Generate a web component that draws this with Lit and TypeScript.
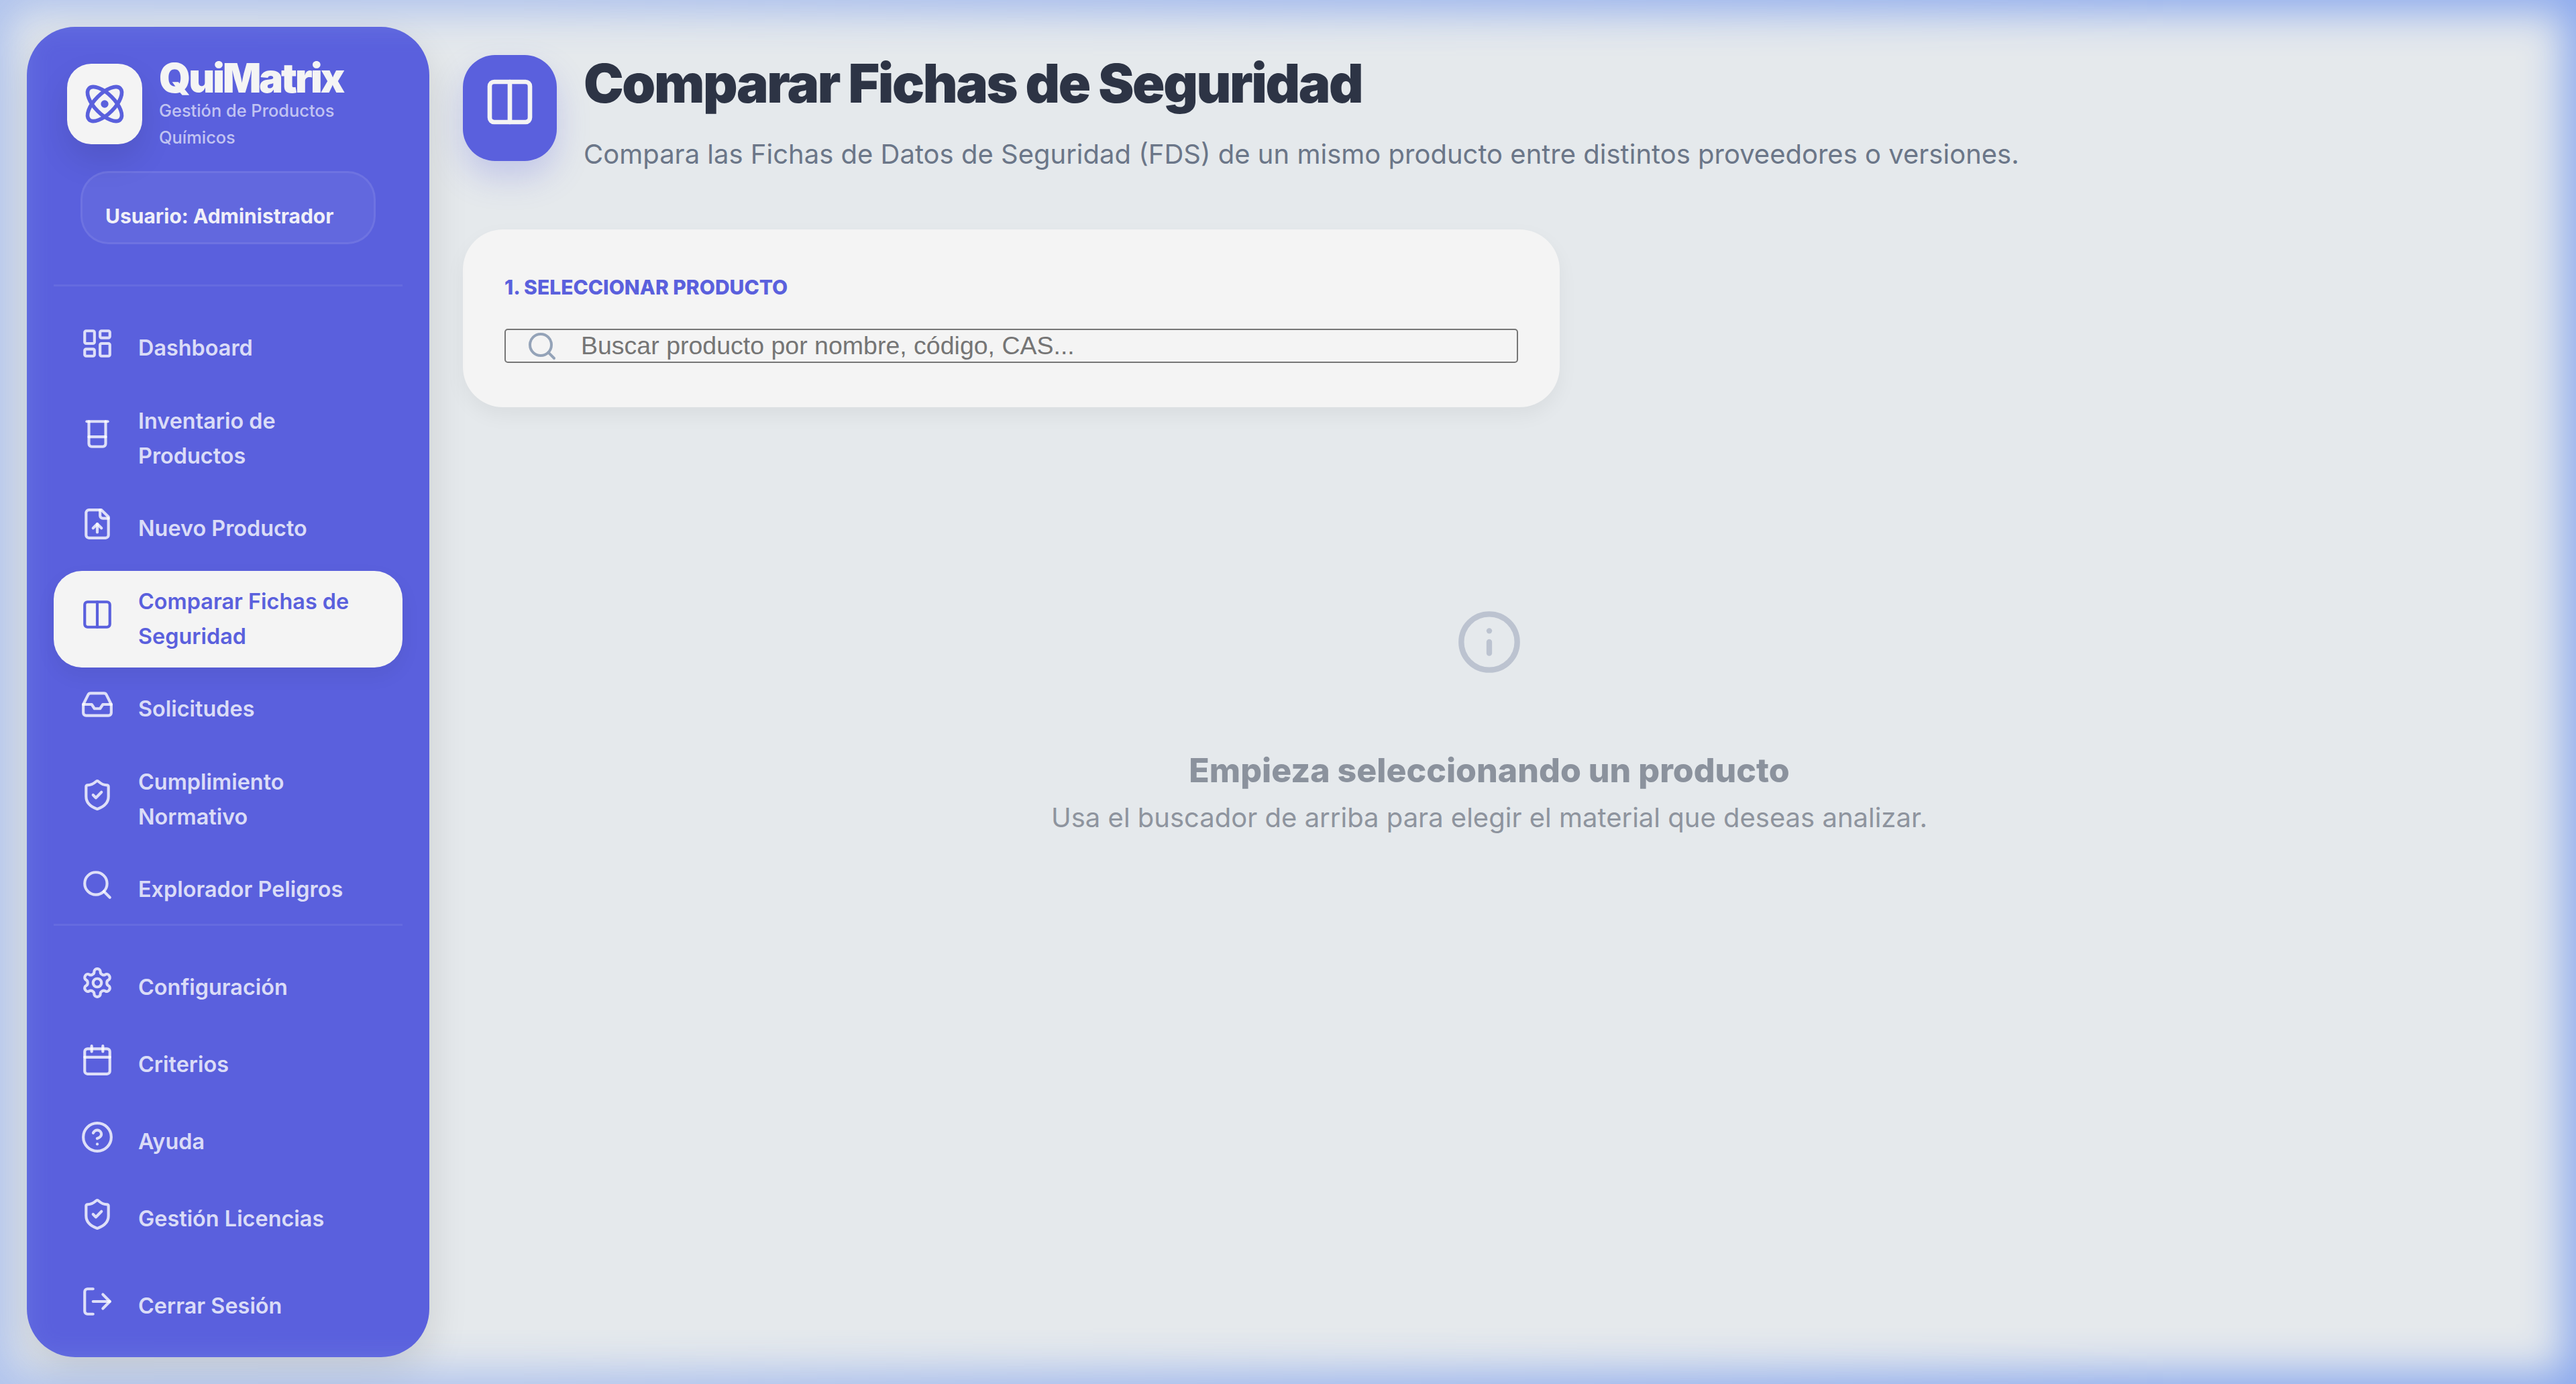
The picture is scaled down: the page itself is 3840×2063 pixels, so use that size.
import { LitElement, html, css, svg } from "lit";
import { customElement } from "lit/decorators.js";

const ic = (inner: unknown, size = 50, sw = 2) => html`<svg class="ic" width=${size} height=${size} viewBox="0 0 24 24" fill="none" stroke="currentColor" stroke-width=${sw} stroke-linecap="round" stroke-linejoin="round">${inner}</svg>`;
const columns = svg`<rect x="3" y="3" width="18" height="18" rx="2"/><path d="M12 3v18"/>`;
const icons: Record<string, unknown> = {
  dash: svg`<rect x="3" y="3" width="7" height="9" rx="1"/><rect x="14" y="3" width="7" height="5" rx="1"/><rect x="14" y="12" width="7" height="9" rx="1"/><rect x="3" y="16" width="7" height="5" rx="1"/>`,
  beaker: svg`<path d="M4.5 3h15"/><path d="M6 3v16a2 2 0 0 0 2 2h8a2 2 0 0 0 2-2V3"/><path d="M6 14h12"/>`,
  file: svg`<path d="M15 2H6a2 2 0 0 0-2 2v16a2 2 0 0 0 2 2h12a2 2 0 0 0 2-2V7Z"/><path d="M14 2v4a2 2 0 0 0 2 2h4"/><path d="M12 12v6"/><path d="m15 15-3-3-3 3"/>`,
  columns,
  inbox: svg`<polyline points="22 12 16 12 14 15 10 15 8 12 2 12"/><path d="M5.45 5.11 2 12v6a2 2 0 0 0 2 2h16a2 2 0 0 0 2-2v-6l-3.45-6.89A2 2 0 0 0 16.76 4H7.24a2 2 0 0 0-1.79 1.11z"/>`,
  shield: svg`<path d="M20 13c0 5-3.5 7.5-7.66 8.95a1 1 0 0 1-.67-.01C7.5 20.5 4 18 4 13V6a1 1 0 0 1 1-1c2 0 4.5-1.2 6.24-2.72a1.17 1.17 0 0 1 1.52 0C14.51 3.81 17 5 19 5a1 1 0 0 1 1 1z"/><path d="m9 12 2 2 4-4"/>`,
  search: svg`<circle cx="11" cy="11" r="8"/><path d="m21 21-4.3-4.3"/>`,
  gear: svg`<path d="M12.22 2h-.44a2 2 0 0 0-2 2v.18a2 2 0 0 1-1 1.73l-.43.25a2 2 0 0 1-2 0l-.15-.08a2 2 0 0 0-2.73.73l-.22.38a2 2 0 0 0 .73 2.73l.15.1a2 2 0 0 1 1 1.72v.51a2 2 0 0 1-1 1.74l-.15.09a2 2 0 0 0-.73 2.73l.22.38a2 2 0 0 0 2.73.73l.15-.08a2 2 0 0 1 2 0l.43.25a2 2 0 0 1 1 1.73V20a2 2 0 0 0 2 2h.44a2 2 0 0 0 2-2v-.18a2 2 0 0 1 1-1.73l.43-.25a2 2 0 0 1 2 0l.15.08a2 2 0 0 0 2.73-.73l.22-.39a2 2 0 0 0-.73-2.73l-.15-.08a2 2 0 0 1-1-1.74v-.5a2 2 0 0 1 1-1.74l.15-.09a2 2 0 0 0 .73-2.73l-.22-.38a2 2 0 0 0-2.73-.73l-.15.08a2 2 0 0 1-2 0l-.43-.25a2 2 0 0 1-1-1.73V4a2 2 0 0 0-2-2z"/><circle cx="12" cy="12" r="3"/>`,
  cal: svg`<path d="M8 2v4"/><path d="M16 2v4"/><rect x="3" y="4" width="18" height="18" rx="2"/><path d="M3 10h18"/>`,
  help: svg`<circle cx="12" cy="12" r="10"/><path d="M9.09 9a3 3 0 0 1 5.83 1c0 2-3 3-3 3"/><path d="M12 17h.01"/>`,
  logout: svg`<path d="M9 21H5a2 2 0 0 1-2-2V5a2 2 0 0 1 2-2h4"/><polyline points="16 17 21 12 16 7"/><line x1="21" y1="12" x2="9" y2="12"/>`,
};

const top: [string, string, boolean?][] = [
  ["dash", "Dashboard"],
  ["beaker", "Inventario de Productos"],
  ["file", "Nuevo Producto"],
  ["columns", "Comparar Fichas de Seguridad", true],
  ["inbox", "Solicitudes"],
  ["shield", "Cumplimiento Normativo"],
  ["search", "Explorador Peligros"],
];
const bottom: [string, string][] = [
  ["gear", "Configuración"],
  ["cal", "Criterios"],
  ["help", "Ayuda"],
  ["shield", "Gestión Licencias"],
];

@customElement("app-root")
export class AppRoot extends LitElement {
  static styles = css`
    :host { display: block; font-family: Inter, "Liberation Sans", sans-serif; }
    .page { position: relative; width: 3840px; height: 2063px; box-sizing: border-box; padding: 40px 90px 40px 40px; background: #e5e9ec; display: flex; gap: 50px; overflow: hidden; }
    .glow { position: absolute; inset: 0; pointer-events: none; box-shadow: inset 0 0 60px 18px #8ba9ee; z-index: 3; -webkit-mask-image: linear-gradient(to right, rgba(0,0,0,.6), rgba(0,0,0,.62) 20%, #000 85%); mask-image: linear-gradient(to right, rgba(0,0,0,.6), rgba(0,0,0,.62) 20%, #000 85%); }
    .side { width: 600px; flex: none; box-sizing: border-box; height: 1983px; border-radius: 72px; background: #5a60dd; box-shadow: 0 24px 60px rgba(0,0,0,.12); display: flex; flex-direction: column; padding: 0 40px; z-index: 1; }
    .brand { display: flex; gap: 25px; margin: 50px 0 0 20px; flex: none; }
    .logo { width: 112px; height: 120px; margin-top: 5px; flex: none; border-radius: 36px; background: #f4f4f4; color: #5a60dd; display: flex; align-items: center; justify-content: center; box-shadow: 0 24px 48px rgba(0,0,0,.1); }
    .bname { font-size: 60px; font-weight: 900; letter-spacing: -3px; line-height: 72px; color: #f4f4f4; margin-top: -10px; }
    .bsub { font-size: 25.4px; font-weight: 500; line-height: 40px; color: rgba(255,255,255,.65); margin-top: -7px; }
    .user { margin: 30px 40px 0; height: 109px; flex: none; box-sizing: border-box; border-radius: 42px; background: rgba(255,255,255,.05); border: 3px solid rgba(255,255,255,.08); padding: 0 34px; display: flex; flex-direction: column; justify-content: flex-end; }
    .user span { font-size: 30px; font-weight: 700; color: #f0f0f8; line-height: 42px; margin-bottom: 18px; }
    .rule { height: 3px; background: rgba(255,255,255,.07); flex: none; }
    .rule.a { margin-top: 60px; margin-bottom: 46px; }
    .rule.b { margin-top: 5px; margin-bottom: 46px; }
    nav { display: flex; flex-direction: column; gap: 16.5px; flex: none; }
    nav.low { gap: 23px; }
    .item { display: flex; align-items: center; gap: 36px; padding: 20px 40px; border-radius: 42px; font-size: 32.4px; font-weight: 600; line-height: 52px; color: rgba(255,255,255,.8); }
    .item .ic { flex: none; margin: -7px 0 7px; }
    .item.on { background: #f4f4f4; color: #5a60dd; box-shadow: 0 12px 30px rgba(0,0,0,.06); }
    .logout { margin-top: 38px; flex: none; }
    main { flex: 1; display: flex; flex-direction: column; min-width: 0; }
    .head { display: flex; gap: 40px; margin-top: 42px; }
    .hicon { width: 140px; height: 158px; flex: none; box-sizing: border-box; padding: 30px; border-radius: 48px; background: #5a60dd; color: #f4f4f4; box-shadow: 0 24px 48px rgba(91,98,222,.25); }
    .hicon .ic { display: block; }
    h1 { margin: -6px 0 0; font-size: 80px; font-weight: 900; letter-spacing: -2.45px; line-height: 96px; color: #2d3445; }
    .hsub { font-size: 40px; color: #6b7688; line-height: 60px; margin-top: 28px; }
    .card { width: 1635px; height: 265px; flex: none; box-sizing: border-box; margin-top: 82px; border-radius: 60px; background: #f4f4f4; padding: 65px 62px 0; box-shadow: 0 12px 30px rgba(0,0,0,.05); }
    .lab { font-size: 30px; font-weight: 800; line-height: 42px; color: #5a60dd; }
    .inp { margin-top: 41px; height: 51px; box-sizing: border-box; border: 2.4px solid #767676; border-radius: 5px; display: flex; align-items: center; gap: 34px; padding-left: 30px; color: #94a3b8; }
    .inp span { font-family: "Liberation Sans", Arial, sans-serif; font-size: 37.5px; color: #757575; }
    .empty { display: flex; flex-direction: column; align-items: center; margin-top: 300px; }
    .empty .ic { color: #bcc3d0; }
    .eh { font-size: 50px; font-weight: 800; color: #8b929d; line-height: 70px; margin-top: 106px; }
    .es { font-size: 40px; color: #8e949e; line-height: 60px; margin-top: 6px; }
  `;

  item(i: string, t: string, on = false) {
    return html`<div class="item ${on ? "on" : ""}">${ic(icons[i])}<span>${t}</span></div>`;
  }

  render() {
    return html`<div class="page">
      <aside class="side">
        <div class="brand">
          <div class="logo">${ic(svg`<circle cx="12" cy="12" r="1"/><path d="M20.2 20.2c2.04-2.03.02-7.36-4.5-11.9-4.52-4.54-9.87-6.54-11.9-4.5-2.04 2.03-.02 7.36 4.5 11.9 4.52 4.54 9.87 6.54 11.9 4.5Z"/><path d="M15.7 15.7c4.52-4.54 6.54-9.87 4.5-11.9-2.03-2.04-7.36-.02-11.9 4.5-4.52 4.54-6.54 9.87-4.5 11.9 2.03 2.04 7.36.02 11.9-4.5Z"/>`, 68)}</div>
          <div><div class="bname">QuiMatrix</div><div class="bsub">Gestión de Productos Químicos</div></div>
        </div>
        <div class="user"><span>Usuario: Administrador</span></div>
        <div class="rule a"></div>
        <nav>${top.map(([i, t, on]) => this.item(i, t, on))}</nav>
        <div class="rule b"></div>
        <nav class="low">${bottom.map(([i, t]) => this.item(i, t))}</nav>
        <div class="logout">${this.item("logout", "Cerrar Sesión")}</div>
      </aside>
      <main>
        <div class="head">
          <div class="hicon">${ic(columns, 80)}</div>
          <div><h1>Comparar Fichas de Seguridad</h1>
          <div class="hsub">Compara las Fichas de Datos de Seguridad (FDS) de un mismo producto entre distintos proveedores o versiones.</div></div>
        </div>
        <section class="card">
          <div class="lab">1. SELECCIONAR PRODUCTO</div>
          <div class="inp">${ic(icons.search, 48)}<span>Buscar producto por nombre, código, CAS...</span></div>
        </section>
        <div class="empty">
          ${ic(svg`<circle cx="12" cy="12" r="10"/><path d="M12 16v-4"/><path d="M12 8h.01"/>`, 100)}
          <div class="eh">Empieza seleccionando un producto</div>
          <div class="es">Usa el buscador de arriba para elegir el material que deseas analizar.</div>
        </div>
      </main>
      <div class="glow"></div>
    </div>`;
  }
}
